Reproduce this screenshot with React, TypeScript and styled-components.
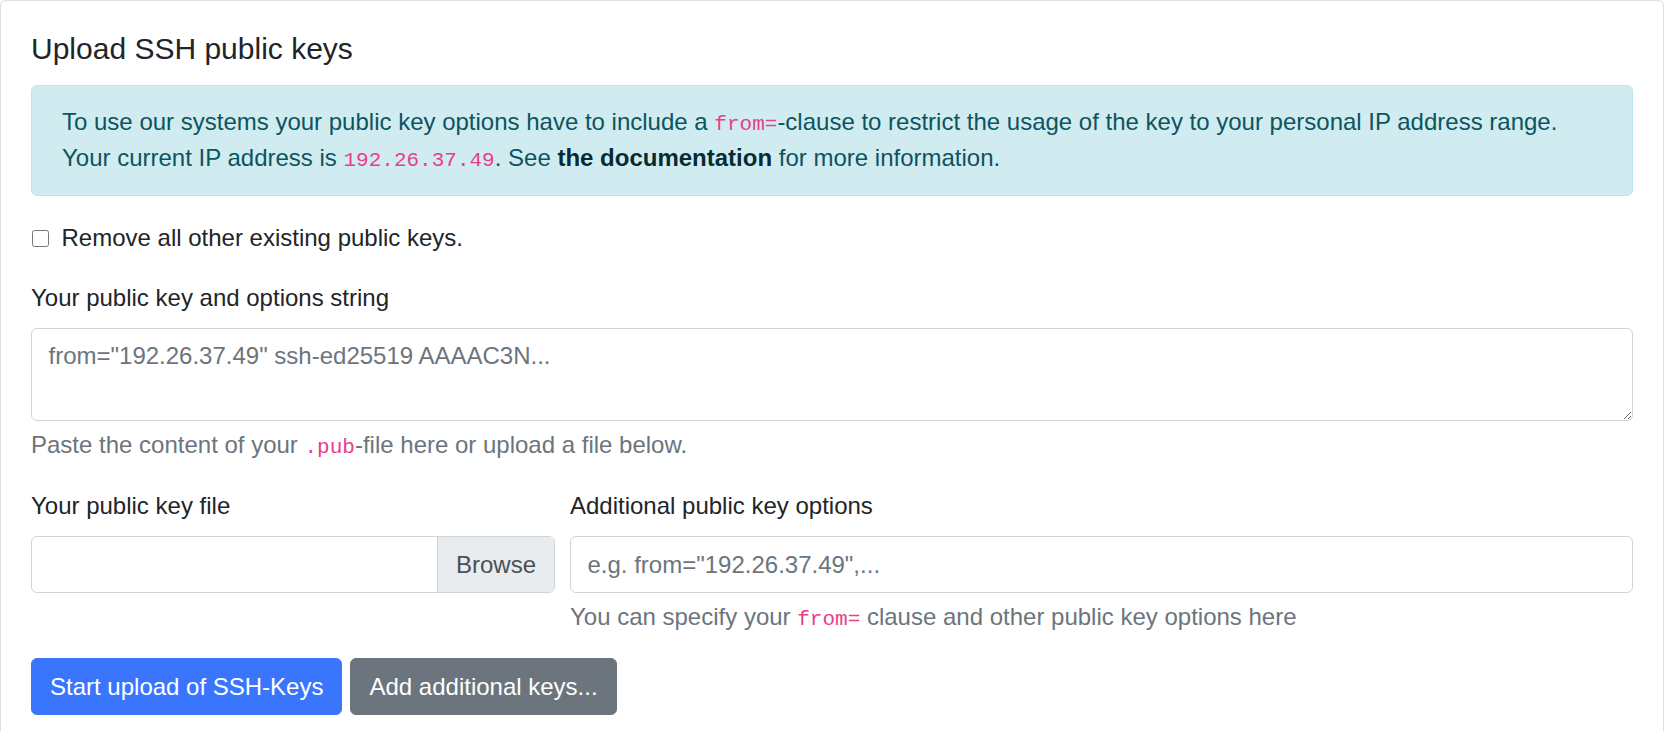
import React from "react";
import styled, { createGlobalStyle } from "styled-components";

const GlobalStyle = createGlobalStyle`
  html, body {
    margin: 0;
    padding: 0;
    background: #fff;
  }
  body {
    font-family: "Liberation Sans", Arial, sans-serif;
    font-size: 24px;
    line-height: 1.5;
    color: #212529;
  }
  *, *::before, *::after { box-sizing: border-box; }
`;

const Card = styled.div`
  margin-right: 1px;
  border: 1.5px solid rgba(0, 0, 0, 0.125);
  border-radius: 6px;
  background: #fff;
  padding: 30px;
`;

const Title = styled.h5`
  margin: 0 0 18px;
  font-size: 30px;
  font-weight: 500;
  line-height: 1.2;
  color: #212529;
`;

const Alert = styled.div`
  margin-bottom: 24px;
  padding: 18px 30px 19px 30px;
  border: 1.5px solid #bee5eb;
  border-radius: 6px;
  background: #d1ecf1;
  color: #0c5460;
  line-height: 36px;
`;

const Code = styled.code`
  font-family: "Liberation Mono", "Courier New", monospace;
  font-size: 87.5%;
  color: #e83e8c;
  line-height: 1;
`;

const AlertLink = styled.a`
  font-weight: 700;
  color: #062c33;
  text-decoration: none;
`;

const CheckRow = styled.label`
  display: flex;
  align-items: center;
  gap: 13px;
  margin-bottom: 24px;
  line-height: 36px;
`;

const Checkbox = styled.input`
  width: 17px;
  height: 17px;
  margin: 0 0 0 0.5px;
`;

const Group = styled.div`
  display: flex;
  flex-direction: column;
  margin-bottom: 25px;
`;

const Label = styled.label`
  display: block;
  margin-bottom: 12px;
  line-height: 36px;
`;

const TextArea = styled.textarea`
  display: block;
  width: 100%;
  height: 93px;
  padding: 9px 18px 9px 16.5px;
  border: 1.5px solid #ced4da;
  border-radius: 6px;
  font-family: "Liberation Sans", Arial, sans-serif;
  font-size: 24px;
  line-height: 36px;
  color: #495057;
  resize: vertical;
  &::placeholder { color: #6c757d; opacity: 1; }
`;

const Help = styled.div`
  margin-top: 6px;
  color: #6c757d;
  line-height: 36px;
`;

const TwoCols = styled.div`
  display: grid;
  grid-template-columns: calc((100% + 15px) / 3 - 15px) 1fr;
  column-gap: 15px;
  margin-bottom: 23px;
`;

const Col = styled.div`
  display: flex;
  flex-direction: column;
`;

const FileBox = styled.div`
  display: flex;
  height: 57px;
  border: 1.5px solid #ced4da;
  border-radius: 6px;
  overflow: hidden;
  background: #fff;
`;

const FileName = styled.div`
  flex: 1;
`;

const BrowseBtn = styled.span`
  display: flex;
  align-items: center;
  padding: 0 18px;
  background: #e9ecef;
  border-left: 1.5px solid #ced4da;
  color: #495057;
`;

const TextInput = styled.input`
  display: block;
  width: 100%;
  height: 57px;
  padding: 9px 18px 9px 16.5px;
  border: 1.5px solid #ced4da;
  border-radius: 6px;
  font-family: "Liberation Sans", Arial, sans-serif;
  font-size: 24px;
  color: #495057;
  &::placeholder { color: #6c757d; opacity: 1; }
`;

const Buttons = styled.div`
  display: flex;
  gap: 8px;
`;

const Button = styled.button<{ $variant: "primary" | "secondary" }>`
  height: 57px;
  padding: 0 18px;
  border: 1.5px solid ${(p) => (p.$variant === "primary" ? "#3a76fd" : "#6c757d")};
  border-radius: 6px;
  background: ${(p) => (p.$variant === "primary" ? "#3a76fd" : "#6c757d")};
  color: #fff;
  font-family: "Liberation Sans", Arial, sans-serif;
  font-size: 24px;
  line-height: 36px;
  cursor: pointer;
`;

export default function App() {
  return (
    <>
      <GlobalStyle />
      <Card>
        <Title>Upload SSH public keys</Title>
        <Alert>
          To use our systems your public key options have to include a <Code>from=</Code>-clause to restrict
          the usage of the key to your personal IP address range.
          <br />
          Your current IP address is <Code>192.26.37.49</Code>. See{" "}
          <AlertLink href="#">the documentation</AlertLink> for more information.
        </Alert>
        <CheckRow>
          <Checkbox type="checkbox" />
          Remove all other existing public keys.
        </CheckRow>
        <Group>
          <Label>Your public key and options string</Label>
          <TextArea placeholder={'from="192.26.37.49" ssh-ed25519 AAAAC3N...'} />
          <Help>
            Paste the content of your <Code>.pub</Code>-file here or upload a file below.
          </Help>
        </Group>
        <TwoCols>
          <Col>
            <Label>Your public key file</Label>
            <FileBox>
              <FileName />
              <BrowseBtn>Browse</BrowseBtn>
            </FileBox>
          </Col>
          <Col>
            <Label>Additional public key options</Label>
            <TextInput placeholder={'e.g. from="192.26.37.49",...'} />
            <Help>
              You can specify your <Code>from=</Code> clause and other public key options here
            </Help>
          </Col>
        </TwoCols>
        <Buttons>
          <Button $variant="primary">Start upload of SSH-Keys</Button>
          <Button $variant="secondary">Add additional keys...</Button>
        </Buttons>
      </Card>
    </>
  );
}
